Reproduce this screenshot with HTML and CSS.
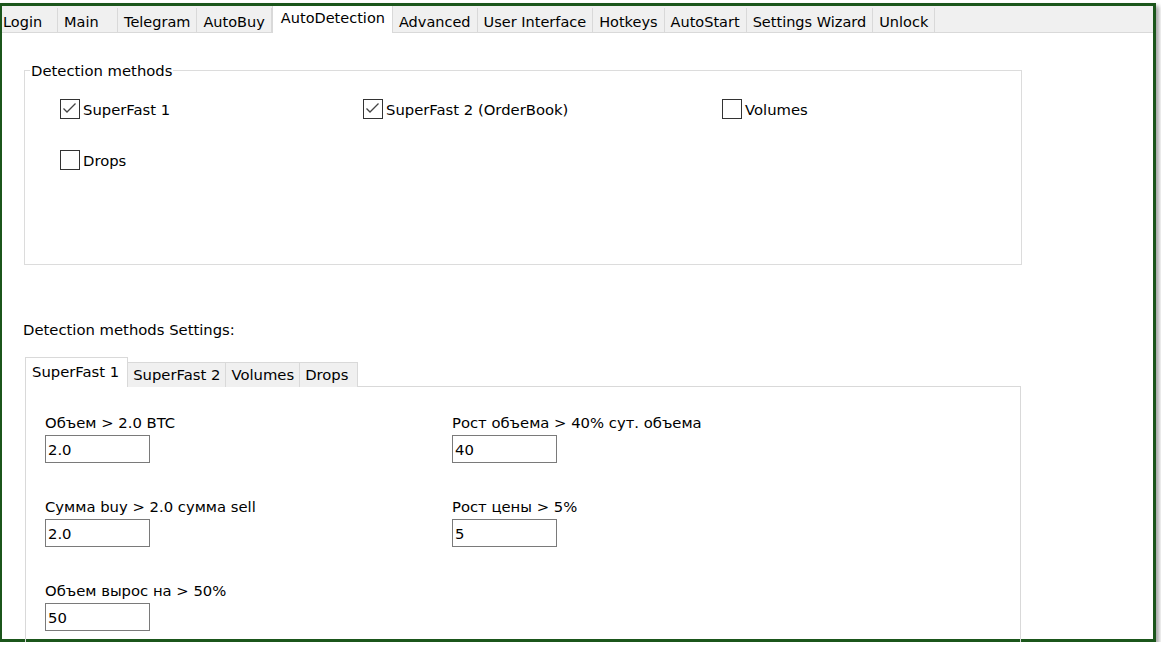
FILE: index.html
```html
<!DOCTYPE html>
<html lang="ru">
<head>
    <meta charset="UTF-8">
    <title>AutoDetection</title>
    <link rel="stylesheet" href="styles.css">
</head>
<body>
    <div class="window">
        <!-- Верхние вкладки -->
        <div class="tabs">
            <div class="tab first">Login</div>
            <div class="tab">Main</div>
            <div class="tab">Telegram</div>
            <div class="tab">AutoBuy</div>
            <div class="tab active">AutoDetection</div>
            <div class="tab">Advanced</div>
            <div class="tab">User Interface</div>
            <div class="tab">Hotkeys</div>
            <div class="tab">AutoStart</div>
            <div class="tab">Settings Wizard</div>
            <div class="tab">Unlock</div>
        </div>

        <div class="page">
            <fieldset class="group">
                <legend>Detection methods</legend>
                <div class="checks">
                    <label class="check">
                        <span class="box checked">
                            <svg width="18" height="18" viewBox="0 0 18 18"><polyline points="2.5,8.5 6,12 14.5,3.5" /></svg>
                        </span>
                        SuperFast 1
                    </label>
                    <label class="check">
                        <span class="box checked">
                            <svg width="18" height="18" viewBox="0 0 18 18"><polyline points="2.5,8.5 6,12 14.5,3.5" /></svg>
                        </span>
                        SuperFast 2 (OrderBook)
                    </label>
                    <label class="check">
                        <span class="box"></span>
                        Volumes
                    </label>
                    <label class="check">
                        <span class="box"></span>
                        Drops
                    </label>
                </div>
            </fieldset>

            <div class="settings-title">Detection methods Settings:</div>

            <div class="subtabs">
                <div class="subtab active">SuperFast 1</div>
                <div class="subtab">SuperFast 2</div>
                <div class="subtab">Volumes</div>
                <div class="subtab last">Drops</div>
            </div>

            <div class="subpanel">
                <div class="fields">
                    <div class="field">
                        <div class="field-label">Объем &gt; 2.0 BTC</div>
                        <input type="text" value="2.0">
                    </div>
                    <div class="field">
                        <div class="field-label">Рост объема &gt; 40% сут. объема</div>
                        <input type="text" value="40">
                    </div>
                    <div class="field">
                        <div class="field-label">Сумма buy &gt; 2.0 сумма sell</div>
                        <input type="text" value="2.0">
                    </div>
                    <div class="field">
                        <div class="field-label">Рост цены &gt; 5%</div>
                        <input type="text" value="5">
                    </div>
                    <div class="field">
                        <div class="field-label">Объем вырос на &gt; 50%</div>
                        <input type="text" value="50">
                    </div>
                </div>
            </div>
        </div>
    </div>
</body>
</html>
```

FILE: styles.css
```css
/* CSS */
html, body {
    margin: 0;
    background-color: #fff;
    overflow: hidden;
}
body {
    font-family: "DejaVu Sans", Verdana, sans-serif;
    font-size: 14.8px;
    color: #000;
}
.window {
    margin-top: 3px;
    margin-left: -1px;
    width: 1151px;
    height: 633px;
    border: 3px solid #1b561b;
    box-shadow: 3px 3px 4px rgba(0, 0, 0, 0.35);
    background-color: #fff;
}
.tabs {
    display: flex;
    height: 26px;
    background-color: #f0f0f0;
    border-bottom: 1px solid #d9d9d9;
    font-size: 14.5px;
}
.tab {
    min-width: 48px;
    padding: 4px 6px 0 6px;
    margin-top: 2px;
    border-right: 1px solid #d9d9d9;
    line-height: 20px;
    white-space: nowrap;
}
.tab.first {
    padding-left: 1px;
}
.tab:nth-child(2) {
    min-width: 47px;
}
.tab.active {
    background-color: #fff;
    margin-top: 0;
    margin-bottom: -1px;
    padding: 2px 7px 0 8px;
    border-left: 1px solid #d9d9d9;
}
.page {
    padding: 29px 0 0 22px;
}
.group {
    margin: 0;
    width: 998px;
    height: 203px;
    padding: 0 0 0 5px;
    border: 1px solid #dcdcdc;
    box-sizing: border-box;
}
.group legend {
    padding: 0 1px;
    line-height: 17px;
}
.checks {
    display: grid;
    grid-template-columns: 303px 359px auto;
    row-gap: 31px;
    padding: 20px 0 0 30px;
}
.check {
    display: flex;
    align-items: center;
    gap: 3px;
    height: 20px;
}
.box {
    width: 18px;
    height: 18px;
    border: 1px solid #333;
    background-color: #fff;
}
.box svg {
    display: block;
}
.box polyline {
    fill: none;
    stroke: #444;
    stroke-width: 1.3;
}
.settings-title {
    margin: 56px 0 0 -1px;
    line-height: 17px;
}
.subtabs {
    display: flex;
    align-items: flex-end;
    margin: 20px 0 0 1px;
    height: 29px;
    position: relative;
    z-index: 1;
}
.subtab {
    height: 24px;
    padding: 0 5px;
    background-color: #f0f0f0;
    border: 1px solid #d9d9d9;
    border-left: none;
    border-bottom: none;
    line-height: 24px;
    white-space: nowrap;
}
.subtab.last {
    padding-right: 9px;
}
.subtab.active {
    height: 29px;
    padding: 0 8px 0 6px;
    background-color: #fff;
    border-left: 1px solid #d9d9d9;
    line-height: 27px;
}
.subpanel {
    margin: -1px 0 0 1px;
    width: 996px;
    height: 258px;
    border: 1px solid #d9d9d9;
    border-bottom: none;
    box-sizing: border-box;
}
.fields {
    display: grid;
    grid-template-columns: 407px auto;
    row-gap: 35px;
    padding: 27px 0 0 19px;
}
.field-label {
    line-height: 17px;
    margin-bottom: 4px;
}
.field input {
    display: block;
    box-sizing: border-box;
    width: 105px;
    height: 28px;
    margin: 0;
    padding: 0 2px;
    border: 1px solid #7a7a7a;
    font-family: inherit;
    font-size: 14.8px;
    color: #000;
}
```
